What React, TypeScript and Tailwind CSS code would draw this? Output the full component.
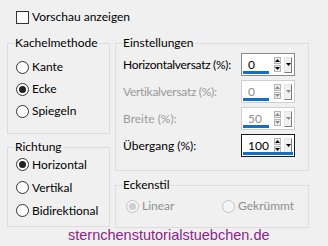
import React from "react";

const font = { fontFamily: 'Lato, "Open Sans", sans-serif' };

function Radio({ label, checked, disabled }: { label: string; checked?: boolean; disabled?: boolean }) {
  return (
    <div className="flex items-center gap-[3px]">
      <div
        className={`flex h-[13px] w-[13px] items-center justify-center rounded-full border ${
          disabled ? "border-[#c4c4c4] bg-[#f4f4f4]" : "border-[#333333] bg-white"
        }`}
      >
        {checked && (
          <div className={`h-[7px] w-[7px] rounded-full ${disabled ? "bg-[#cfcfcf]" : "bg-[#222222]"}`} />
        )}
      </div>
      <span className={disabled ? "text-[#8f8f8f]" : "text-black"}>{label}</span>
    </div>
  );
}

function Tri({ up, color }: { up?: boolean; color: string }) {
  return (
    <svg width="5" height="3" viewBox="0 0 5 3">
      <path d={up ? "M0 3 L2.5 0 L5 3 Z" : "M0 0 L5 0 L2.5 3 Z"} fill={color} />
    </svg>
  );
}

function Spin({ value, disabled, focused }: { value: string; disabled?: boolean; focused?: boolean }) {
  const arrow = disabled ? "#8a8a8a" : "#000";
  return (
    <div
      className={`flex h-[23px] w-[54px] items-center border bg-white ${
        focused ? "border-[#1a1a1a]" : disabled ? "border-[#cfcfcf]" : "border-[#8a8a8a]"
      }`}
    >
      <div className="relative flex h-full w-[31px] items-center pl-[6px] text-[12px]">
        <span className={disabled ? "text-[#8f8f8f]" : "text-black"}>{value}</span>
        <div className={`absolute bottom-[1px] left-[1px] h-[3px] bg-[#1570c4] ${focused ? "w-[50px]" : "w-[26px]"}`} />
      </div>
      <div className="ml-[1px] flex flex-col gap-[1px]">
        <div className="flex h-[7px] w-[7px] items-center justify-center border border-[#b5b5b5] bg-[#ececec]">
          <Tri up color={arrow} />
        </div>
        <div className="flex h-[7px] w-[7px] items-center justify-center border border-[#b5b5b5] bg-[#ececec]">
          <Tri color={arrow} />
        </div>
      </div>
      <div className="ml-[3px] flex h-[16px] w-[8px] items-center justify-center border border-b-[#7d7d7d] border-r-[#7d7d7d] border-l-[#e6e6e6] border-t-[#e6e6e6] bg-[#f0f0f0]">
        <Tri color={arrow} />
      </div>
    </div>
  );
}

function Group({ title, className, children }: { title: string; className?: string; children: React.ReactNode }) {
  return (
    <fieldset className={`border border-[#dcdcdc] ${className ?? ""}`}>
      <legend className="ml-[6px] px-[1px] leading-[16px]">{title}</legend>
      {children}
    </fieldset>
  );
}

export default function App() {
  return (
    <div className="h-[246px] w-[328px] overflow-hidden bg-[#f0f0f0] text-[12px] text-black" style={font}>
      <div className="flex items-center gap-[3px] pl-[16px] pt-[10px] leading-[14px]">
        <div className="h-[13px] w-[13px] border border-[#333333] bg-white" />
        <span>Vorschau anzeigen</span>
      </div>

      <div className="mt-[11px] flex gap-[5px] pl-[7px]">
        <div className="flex w-[103px] flex-col gap-[5px]">
          <Group title="Kachelmethode" className="pb-[11px]">
            <div className="mt-[5px] flex flex-col pl-[8px]">
              <div className="flex h-[22px] items-center"><Radio label="Kante" /></div>
              <div className="flex h-[22px] items-center"><Radio label="Ecke" checked /></div>
              <div className="flex h-[22px] items-center"><Radio label="Spiegeln" /></div>
            </div>
          </Group>
          <Group title="Richtung" className="pb-[4px]">
            <div className="-mt-[2px] flex flex-col pl-[8px]">
              <div className="flex h-[23px] items-center"><Radio label="Horizontal" checked /></div>
              <div className="flex h-[23px] items-center"><Radio label="Vertikal" /></div>
              <div className="flex h-[23px] items-center"><Radio label="Bidirektional" /></div>
            </div>
          </Group>
        </div>

        <div className="flex w-[194px] flex-col gap-[6px]">
          <Group title="Einstellungen" className="pb-[11px]">
            <div className="flex flex-col pl-[7px]">
              <div className="flex h-[27px] items-center">
                <span className="w-[118px] tracking-[-0.3px]">Horizontalversatz (%):</span>
                <Spin value="0" />
              </div>
              <div className="flex h-[27px] items-center">
                <span className="w-[118px] tracking-[-0.3px] text-[#9a9a9a]">Vertikalversatz (%):</span>
                <Spin value="0" disabled />
              </div>
              <div className="flex h-[27px] items-center">
                <span className="w-[118px] text-[#9a9a9a]">Breite (%):</span>
                <Spin value="50" disabled />
              </div>
              <div className="flex h-[27px] items-center">
                <span className="w-[118px]">Übergang (%):</span>
                <Spin value="100" focused />
              </div>
            </div>
          </Group>
          <Group title="Eckenstil" className="pb-[10px]">
            <div className="mt-[2px] flex h-[22px] items-center pl-[10px]">
              <div className="w-[96px]"><Radio label="Linear" checked disabled /></div>
              <Radio label="Gekrümmt" disabled />
            </div>
          </Group>
        </div>
      </div>

      <div
        className="-mt-[1px] pl-[68px] text-[14.5px] leading-[16px] text-[#8c1f8c]"
        style={{ fontFamily: '"Liberation Sans", Arial, sans-serif' }}
      >
        sternchenstutorialstuebchen.de
      </div>
    </div>
  );
}
